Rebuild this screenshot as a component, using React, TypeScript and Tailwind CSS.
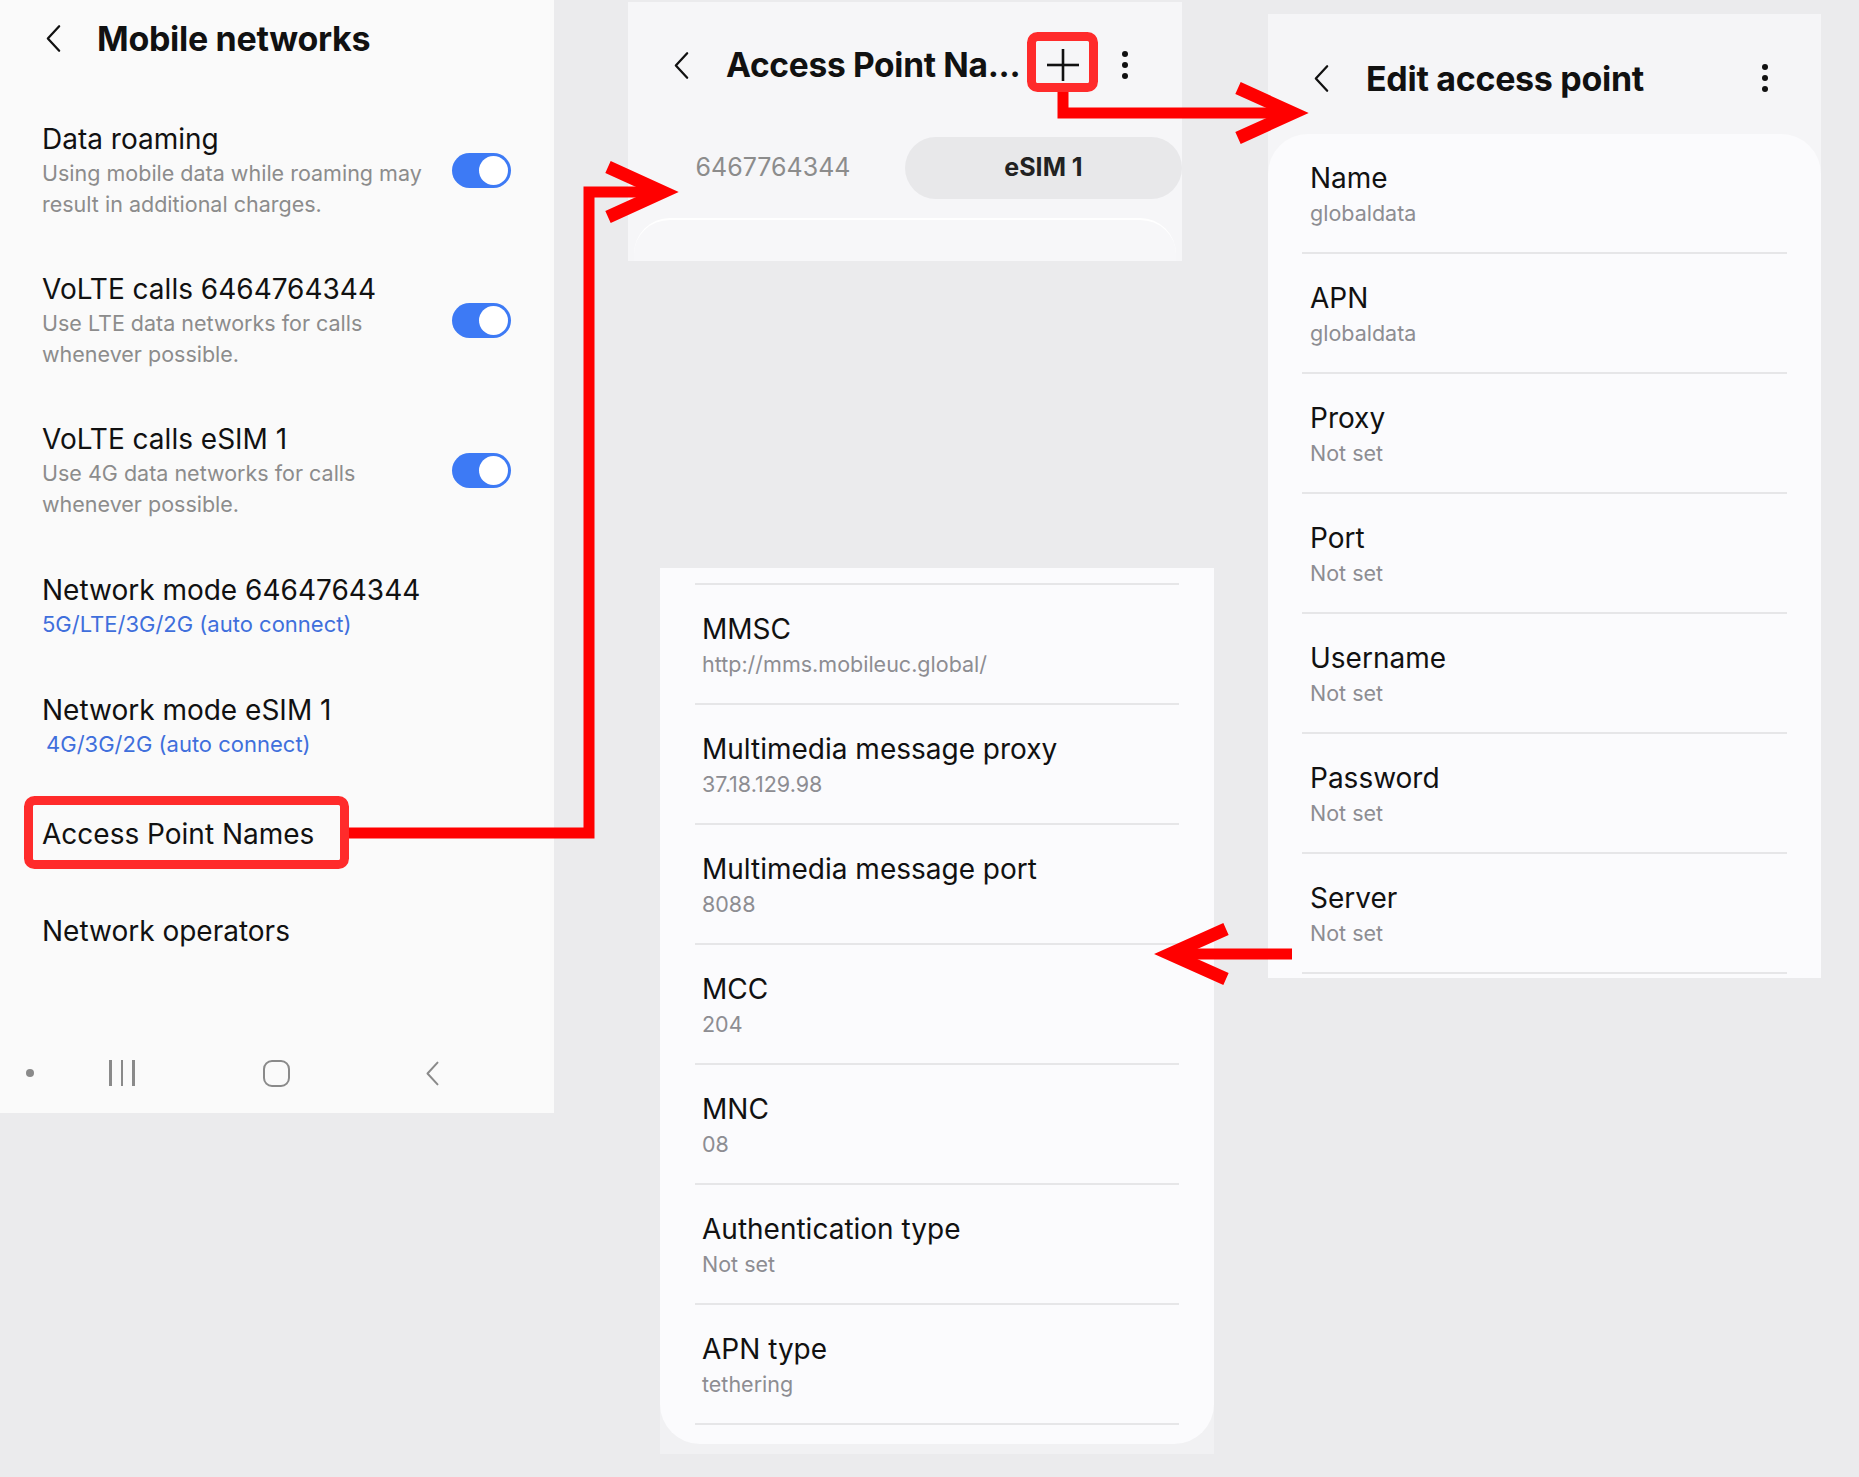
import React from 'react';

const Chevron = ({ className }: { className?: string }) => (
  <svg viewBox="0 0 18 30" className={className} fill="none" stroke="currentColor" strokeWidth={2.4} strokeLinecap="round" strokeLinejoin="round">
    <polyline points="15,2 3,15 15,28" />
  </svg>
);

const Kebab = () => (
  <div className="flex flex-col items-center gap-[5px]">
    <span className="w-[6px] h-[6px] rounded-full bg-[#111]" />
    <span className="w-[6px] h-[6px] rounded-full bg-[#111]" />
    <span className="w-[6px] h-[6px] rounded-full bg-[#111]" />
  </div>
);

const Toggle = () => (
  <div className="w-[59px] h-[35px] rounded-full bg-[#3d7af5] flex items-center justify-end pr-[3px]">
    <div className="w-[29px] h-[29px] rounded-full bg-white" />
  </div>
);

const ToggleItem = ({ title, lines, h }: { title: string; lines: string[]; h: string }) => (
  <div className={`${h} flex items-start pl-[42px] pr-[43px]`}>
    <div className="flex-1">
      <div className="text-[28px] leading-[38px] text-[#111]">{title}</div>
      {lines.map((l) => (
        <div key={l} className="text-[21.5px] leading-[31px] text-[#8c8c8c]">{l}</div>
      ))}
    </div>
    <div className="h-[100px] flex items-center">
      <Toggle />
    </div>
  </div>
);

const ModeItem = ({ title, sub, h, indent }: { title: string; sub: string; h: string; indent?: boolean }) => (
  <div className={`${h} pl-[42px]`}>
    <div className="text-[28px] leading-[38px] text-[#111]">{title}</div>
    <div className={`text-[22px] leading-[31px] text-[#3f6fdc] ${indent ? 'pl-[4px]' : ''}`}>{sub}</div>
  </div>
);

const Field = ({ label, value }: { label: string; value: string }) => (
  <div className="h-[118px] pt-[26px] pl-[42px]">
    <div className="text-[28px] leading-[36px] text-[#111]">{label}</div>
    <div className="mt-[2px] text-[21.5px] leading-[30px] text-[#8d8d92]">{value}</div>
  </div>
);

const mmsFields = [
  ['MMSC', 'http://mms.mobileuc.global/'],
  ['Multimedia message proxy', '37.18.129.98'],
  ['Multimedia message port', '8088'],
  ['MCC', '204'],
  ['MNC', '08'],
  ['Authentication type', 'Not set'],
  ['APN type', 'tethering'],
];

const editFields = [
  ['Name', 'globaldata'],
  ['APN', 'globaldata'],
  ['Proxy', 'Not set'],
  ['Port', 'Not set'],
  ['Username', 'Not set'],
  ['Password', 'Not set'],
  ['Server', 'Not set'],
];

export default function App() {
  return (
    <div className="relative w-[1859px] h-[1477px] bg-[#ebebed] overflow-hidden font-[family-name:Inter,_'Noto_Sans',_sans-serif]">
      {/* Mobile networks */}
      <div className="absolute left-0 top-0 w-[554px] h-[1113px] bg-[#fafafa] flex flex-col">
        <div className="h-[76px] flex items-center pl-[45px]">
          <Chevron className="w-[17px] h-[29px] text-[#111]" />
          <h1 className="ml-[35px] text-[34px] font-bold text-[#111] tracking-[-0.3px]">Mobile networks</h1>
        </div>
        <div className="mt-[44px] flex flex-col">
          <ToggleItem h="h-[150px]" title="Data roaming" lines={['Using mobile data while roaming may', 'result in additional charges.']} />
          <ToggleItem h="h-[150px]" title="VoLTE calls 6464764344" lines={['Use LTE data networks for calls', 'whenever possible.']} />
          <ToggleItem h="h-[151px]" title="VoLTE calls eSIM 1" lines={['Use 4G data networks for calls', 'whenever possible.']} />
          <ModeItem h="h-[120px]" title="Network mode 6464764344" sub="5G/LTE/3G/2G (auto connect)" />
          <ModeItem h="h-[124px]" title="Network mode eSIM 1" sub="4G/3G/2G (auto connect)" indent />
          <div className="h-[97px] pl-[42px] text-[28px] leading-[38px] text-[#111]">Access Point Names</div>
          <div className="h-[131px] pl-[42px] text-[28px] leading-[38px] text-[#111]">Network operators</div>
          <div className="h-[60px] flex items-center">
            <span className="ml-[26px] w-[8px] h-[8px] rounded-full bg-[#8a8a8a]" />
            <div className="ml-[75px] flex gap-[9px]">
              <span className="w-[2.5px] h-[26px] bg-[#8a8a8a]" />
              <span className="w-[2.5px] h-[26px] bg-[#8a8a8a]" />
              <span className="w-[2.5px] h-[26px] bg-[#8a8a8a]" />
            </div>
            <span className="ml-[128px] w-[27px] h-[27px] rounded-[9px] border-[2.5px] border-[#8a8a8a]" />
            <Chevron className="ml-[135px] w-[15px] h-[29px] text-[#8a8a8a]" />
          </div>
        </div>
      </div>

      {/* Access Point Names list header */}
      <div className="absolute left-[628px] top-[2px] w-[554px] h-[259px] bg-[#f6f6f8] flex flex-col">
        <div className="mt-[34px] h-[58px] flex items-center pl-[45px] pr-[54px]">
          <Chevron className="w-[17px] h-[31px] text-[#111]" />
          <h1 className="ml-[36px] flex-1 text-[33.5px] font-bold text-[#111] whitespace-nowrap tracking-[-0.3px]">Access Point Na...</h1>
          <svg viewBox="0 0 34 34" className="w-[34px] h-[34px]" fill="none" stroke="#111" strokeWidth={2.6}>
            <line x1="17" y1="1" x2="17" y2="33" />
            <line x1="1" y1="17" x2="33" y2="17" />
          </svg>
          <div className="ml-[42px]">
            <Kebab />
          </div>
        </div>
        <div className="mt-[43px] h-[62px] flex">
          <div className="w-[277px] pl-[13px] flex items-center justify-center text-[25px] text-[#8c8c8c]">6467764344</div>
          <div className="flex-1 rounded-full bg-[#e8e8ea] flex items-center justify-center text-[25px] font-bold text-[#222]">eSIM 1</div>
        </div>
        <div className="mt-[19px] mx-[6px] flex-1 rounded-t-[36px] bg-[#f7f7f9] border-t-[2px] border-white" />
      </div>

      {/* APN details (continued) */}
      <div className="absolute left-[660px] top-[568px] w-[554px] h-[886px] bg-[#f1f1f3]">
        <div className="h-[876px] rounded-b-[40px] bg-[#fbfbfd] pt-[15px]">
          {mmsFields.map(([label, value]) => (
            <div key={label}>
              <div className="mx-[35px] h-[2px] bg-[#e6e6e8]" />
              <Field label={label} value={value} />
            </div>
          ))}
          <div className="mx-[35px] h-[2px] bg-[#e6e6e8]" />
        </div>
      </div>

      {/* Edit access point */}
      <div className="absolute left-[1268px] top-[14px] w-[553px] h-[964px] bg-[#f5f5f7] flex flex-col">
        <div className="h-[120px] pt-[8px] flex items-center pl-[45px] pr-[53px]">
          <Chevron className="w-[17px] h-[31px] text-[#111]" />
          <h1 className="ml-[36px] flex-1 text-[34px] font-bold text-[#111] tracking-[-0.3px]">Edit access point</h1>
          <Kebab />
        </div>
        <div className="flex-1 rounded-t-[40px] bg-[#fbfbfd]">
          {editFields.map(([label, value]) => (
            <div key={label}>
              <Field label={label} value={value} />
              <div className="mx-[34px] h-[2px] bg-[#e6e6e8]" />
            </div>
          ))}
        </div>
      </div>

      {/* red annotations */}
      <svg className="absolute inset-0 pointer-events-none" width="1859" height="1477" viewBox="0 0 1859 1477" fill="none">
        <rect x="28.5" y="800.5" width="316" height="64" rx="6" stroke="#ff2b2b" strokeWidth="9" />
        <rect x="1031.5" y="36.5" width="62" height="51" rx="6" stroke="#ff2b2b" strokeWidth="9" />
        <g stroke="#ff0000" strokeWidth="11" strokeLinejoin="miter">
          <path d="M349 833 H589 V192 H660" />
          <path d="M608 167 L663 192 L608 217" strokeWidth="13" />
          <path d="M1063 92 V113 H1290" />
          <path d="M1238 88 L1293 113 L1238 138" strokeWidth="13" />
          <path d="M1292 954 H1172" />
          <path d="M1226 929 L1170 954 L1226 979" strokeWidth="13" />
        </g>
      </svg>
    </div>
  );
}
